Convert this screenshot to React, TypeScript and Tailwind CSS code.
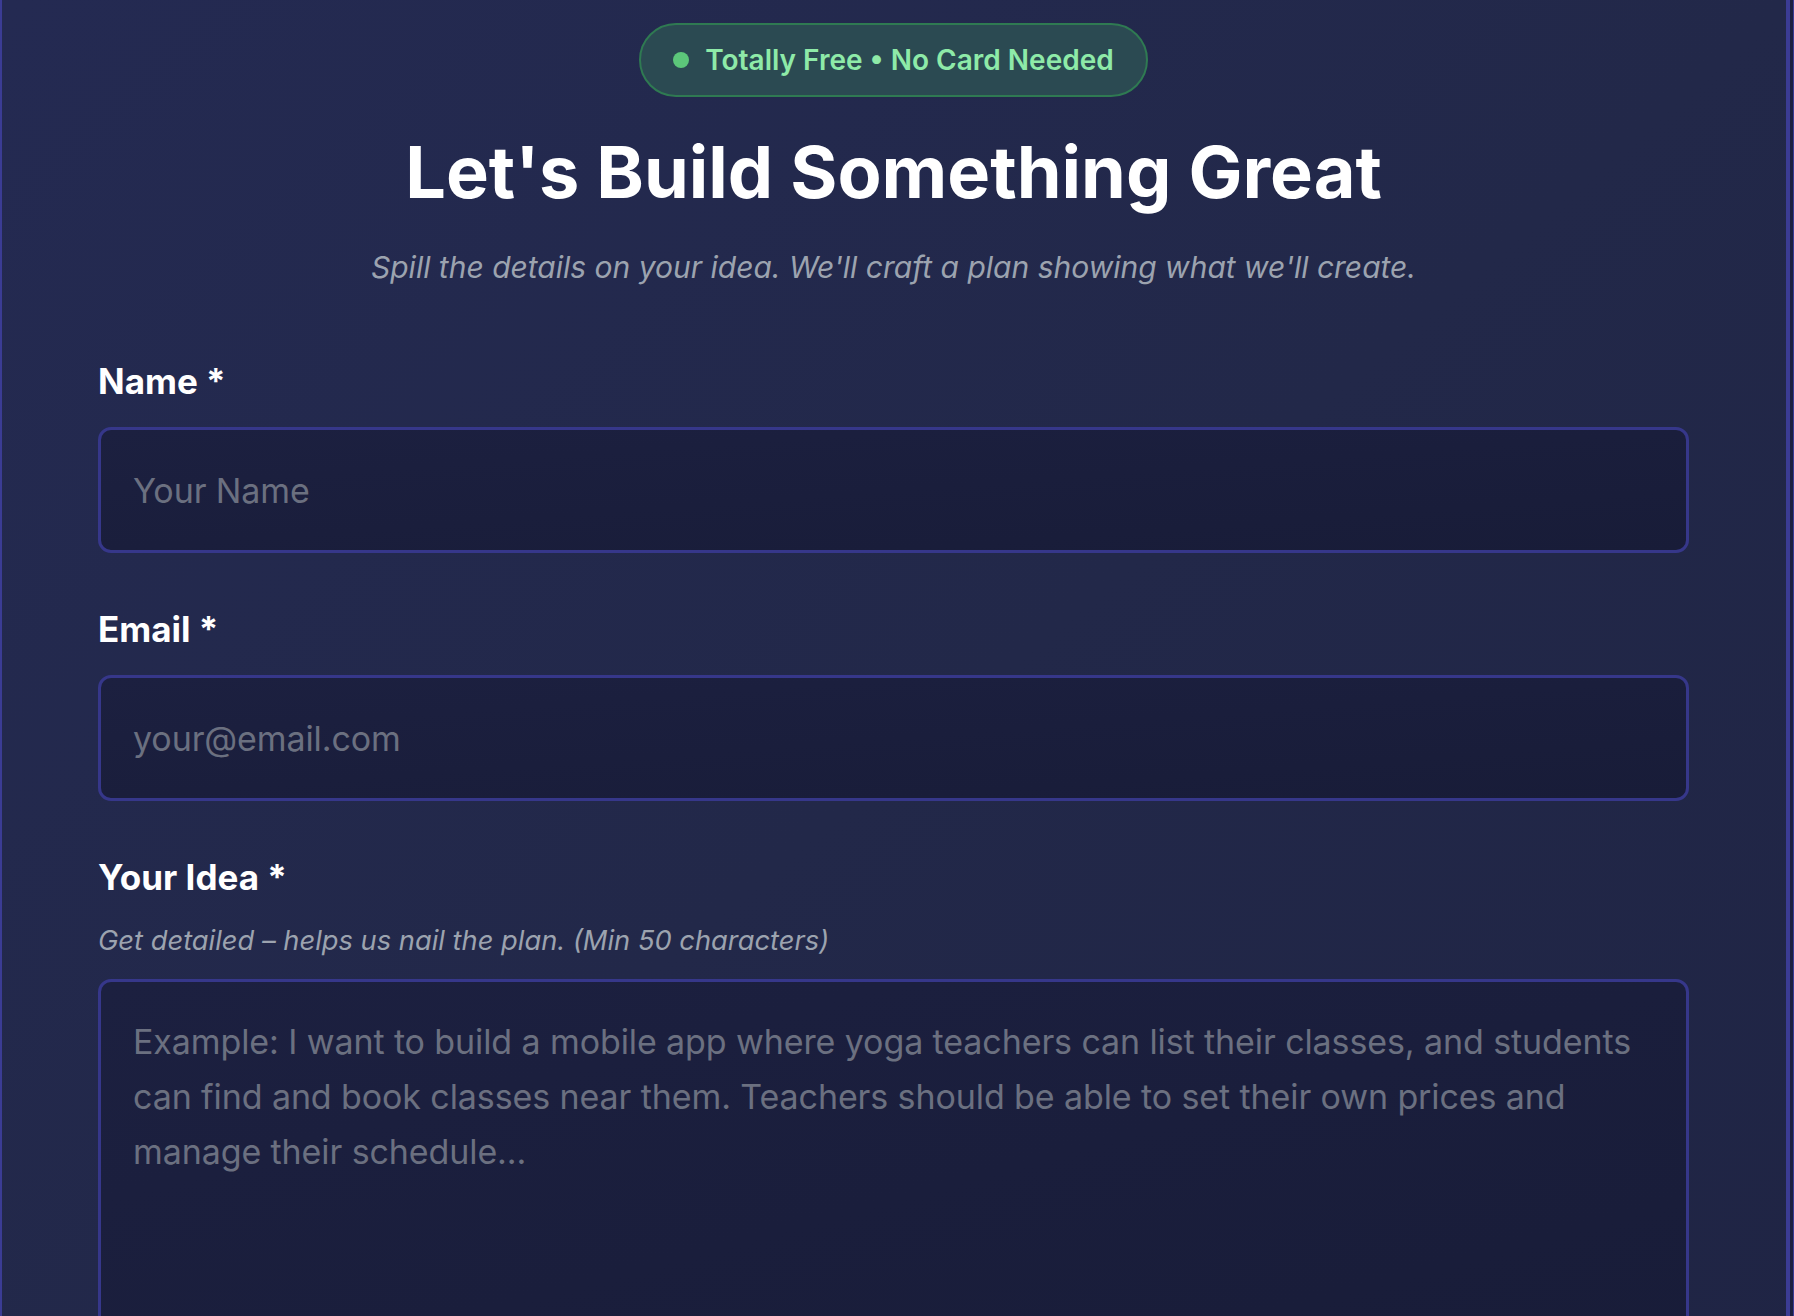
import React from "react";

function Label({ children }: { children: React.ReactNode }) {
  return (
    <label className="block text-[35px] font-bold leading-[52px] text-white">
      {children}
    </label>
  );
}

const fieldClass =
  "block w-full rounded-[13px] border-[3px] border-[#36378a] bg-gradient-to-br from-[#1c2040] to-[#181c38] px-8 text-[34px] tracking-[-0.1px] text-white placeholder:text-[#6b7080] focus:outline-none";

export default function App() {
  return (
    <div
      className="flex min-h-screen bg-[#1f2444]"
      style={{ fontFamily: "Inter, 'Noto Sans', sans-serif" }}
    >
      <div className="w-[1790px] shrink-0 border-l-2 border-r-4 border-[#3b3c94] bg-gradient-to-br from-[#242a52] via-[#222849] to-[#1f2444] pb-24 pl-[96px] pr-[97px] pt-[23px]">
        <div className="flex flex-col items-center">
          <div className="flex h-[74px] items-center gap-4 rounded-full border-2 border-[#2f7a52] bg-[#2b4a52] px-[32px]">
            <span className="h-4 w-4 rounded-full bg-[#5cc77a]" />
            <span className="text-[28px] font-semibold text-[#8eeaa8]">
              Totally Free • No Card Needed
            </span>
          </div>
          <h1 className="mt-[35px] text-[72px] font-bold leading-[80px] text-white">
            Let's Build Something Great
          </h1>
          <p className="mt-[33px] text-[30px] italic leading-[44px] text-[#9ca3af]">
            Spill the details on your idea. We'll craft a plan showing what we'll create.
          </p>
        </div>

        <form className="mt-[66px] flex flex-col">
          <Label>Name *</Label>
          <input
            type="text"
            placeholder="Your Name"
            className={`${fieldClass} mt-5 h-[126px]`}
          />

          <div className="mt-[50px]">
            <Label>Email *</Label>
          </div>
          <input
            type="email"
            placeholder="your@email.com"
            className={`${fieldClass} mt-5 h-[126px]`}
          />

          <div className="mt-[50px]">
            <Label>Your Idea *</Label>
          </div>
          <p className="mt-[17px] text-[27.3px] italic leading-[42px] text-[#9ca3af]">
            Get detailed – helps us nail the plan. (Min 50 characters)
          </p>
          <textarea
            rows={8}
            placeholder="Example: I want to build a mobile app where yoga teachers can list their classes, and students can find and book classes near them. Teachers should be able to set their own prices and manage their schedule..."
            className={`${fieldClass} mt-[17px] h-[440px] resize-none py-[32px] leading-[55px]`}
          />
        </form>
      </div>
      <div className="w-1 shrink-0 border-r border-[#3b3c94] bg-[#1c2040]" />
    </div>
  );
}
